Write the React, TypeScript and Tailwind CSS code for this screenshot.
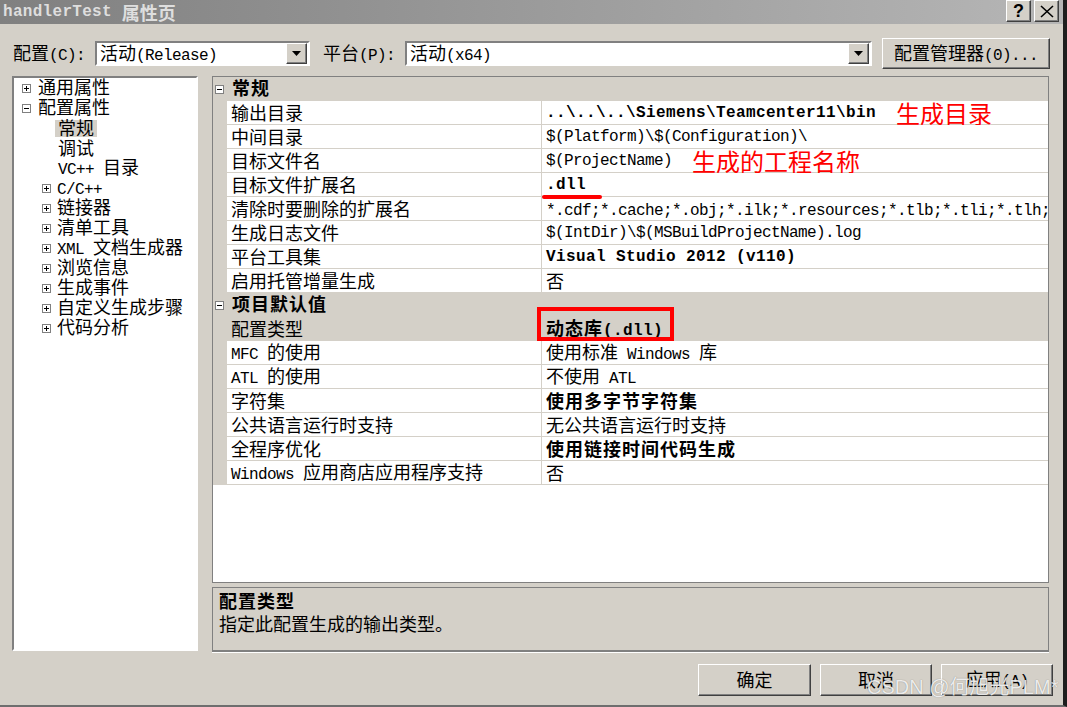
import React from 'react';

const CJK_RE = /([\u3000-\u303f\u4e00-\u9fff\uff00-\uffef]+)/;

function T({ s, bold = false }: { s: string; bold?: boolean }) {
  const parts = s.split(CJK_RE);
  return (
    <span className="whitespace-pre leading-[1.15]">
      {parts.map((p, i) =>
        p === '' ? null : i % 2 === 1 ? (
          <span
            key={i}
            className={
              bold
                ? "font-['Noto_Sans_CJK_SC',sans-serif] text-[18px] font-bold tracking-[1px]"
                : "font-['Noto_Sans_CJK_SC',sans-serif] text-[18px]"
            }
          >
            {p}
          </span>
        ) : (
          <span
            key={i}
            className={
              bold
                ? "font-['Liberation_Mono',monospace] text-[16px] font-bold tracking-[0.4px]"
                : "font-['Liberation_Mono',monospace] text-[16px] tracking-[-0.6px]"
            }
          >
            {p}
          </span>
        ),
      )}
    </span>
  );
}

function BoxIcon({ open }: { open: boolean }) {
  return (
    <svg width="9" height="9" viewBox="0 0 9 9" className="shrink-0">
      <rect x="0.5" y="0.5" width="8" height="8" fill="white" stroke="#808080" />
      <line x1="2" y1="4.5" x2="7" y2="4.5" stroke="black" />
      {!open && <line x1="4.5" y1="2" x2="4.5" y2="7" stroke="black" />}
    </svg>
  );
}

function DropArrow() {
  return (
    <div className="flex h-[21px] w-[21px] shrink-0 items-center justify-center border border-t-white border-l-white border-r-[#404040] border-b-[#404040] bg-[#d4d0c8] shadow-[inset_-1px_-1px_0_#808080]">
      <svg width="9" height="5" viewBox="0 0 9 5">
        <path d="M0 0H9L4.5 5Z" fill="black" />
      </svg>
    </div>
  );
}

function Combo({ text, width }: { text: string; width: string }) {
  return (
    <div
      className={`flex h-[25px] items-center justify-between border-2 border-t-[#808080] border-l-[#808080] border-r-white border-b-white bg-white pl-[3px] pr-[1px] ${width}`}
    >
      <T s={text} />
      <DropArrow />
    </div>
  );
}

const raised =
  'flex items-center justify-center border border-t-white border-l-white border-r-[#404040] border-b-[#404040] bg-[#d4d0c8] shadow-[inset_-1px_-1px_0_#808080]';

type TreeItem = { t: string; kind: 'root' | 'sub' | 'leaf'; open?: boolean; sel?: boolean };

const tree: TreeItem[] = [
  { t: '通用属性', kind: 'root', open: false },
  { t: '配置属性', kind: 'root', open: true },
  { t: '常规', kind: 'leaf', sel: true },
  { t: '调试', kind: 'leaf' },
  { t: 'VC++ 目录', kind: 'leaf' },
  { t: 'C/C++', kind: 'sub' },
  { t: '链接器', kind: 'sub' },
  { t: '清单工具', kind: 'sub' },
  { t: 'XML 文档生成器', kind: 'sub' },
  { t: '浏览信息', kind: 'sub' },
  { t: '生成事件', kind: 'sub' },
  { t: '自定义生成步骤', kind: 'sub' },
  { t: '代码分析', kind: 'sub' },
];

function TreeRow({ item }: { item: TreeItem }) {
  if (item.kind === 'leaf') {
    return (
      <div className="flex h-[20px] items-center pl-[41px]">
        <span className={item.sel ? 'flex h-[17px] items-center bg-[#d4d0c8] px-[3px]' : 'flex h-[17px] items-center px-[3px]'}>
          <T s={item.t} />
        </span>
      </div>
    );
  }
  return (
    <div className={item.kind === 'root' ? 'flex h-[20px] items-center pl-[8px]' : 'flex h-[20px] items-center pl-[28px]'}>
      <BoxIcon open={!!item.open} />
      <span className={item.kind === 'root' ? 'ml-[7px]' : 'ml-[6px]'}>
        <T s={item.t} />
      </span>
    </div>
  );
}

function Category({ title }: { title: string }) {
  return (
    <div className="flex h-[24px] shrink-0 items-center bg-[#d4d0c8] pl-[2px]">
      <BoxIcon open />
      <span className="ml-[8px]">
        <T s={title} bold />
      </span>
    </div>
  );
}

function Row({ label, children, selected = false }: { label: string; children: React.ReactNode; selected?: boolean }) {
  return (
    <div className="flex h-[24px] shrink-0">
      <div className="w-[14px] shrink-0 bg-[#d4d0c8]" />
      <div
        className={
          selected
            ? 'flex w-[315px] shrink-0 items-center border-r border-b border-[#d4d0c8] bg-[#d4d0c8] pl-[4px]'
            : 'flex w-[315px] shrink-0 items-center border-r border-b border-[#d4d0c8] bg-white pl-[4px]'
        }
      >
        <T s={label} />
      </div>
      <div
        className={
          selected
            ? 'relative flex min-w-0 flex-1 items-center border-b border-[#d4d0c8] bg-[#d4d0c8] pl-[4px]'
            : 'relative flex min-w-0 flex-1 items-center border-b border-[#d4d0c8] bg-white pl-[4px]'
        }
      >
        {children}
      </div>
    </div>
  );
}

const note = "ml-[20px] shrink-0 font-['Noto_Sans_CJK_SC',sans-serif] text-[24px] leading-none text-[#ff0000]";

export default function App() {
  return (
    <div className="relative flex h-[707px] w-[1067px] flex-col overflow-hidden border-r-4 border-b-2 border-r-[#1e1e1e] border-b-[#6e6e6e] bg-[#d4d0c8] text-black">
      {/* title bar */}
      <div className="flex h-[24px] shrink-0 items-start bg-linear-to-r from-[#808080] to-[#b6b6b6]">
        <div className="flex h-[24px] items-center whitespace-pre pl-[3px] text-[#dedede]">
          <span className="font-['Liberation_Mono',monospace] text-[16px] font-bold tracking-[0.3px]">{'handlerTest '}</span>
          <span className="font-['Noto_Sans_CJK_SC',sans-serif] text-[18px] font-bold">属性页</span>
        </div>
        <div className="ml-auto mr-[4px] flex gap-[3px]">
          <div className={`${raised} h-[22px] w-[25px]`}>
            <span className="font-['Liberation_Sans',sans-serif] text-[18px] font-bold leading-none">?</span>
          </div>
          <div className={`${raised} h-[22px] w-[25px]`}>
            <svg width="14" height="13" viewBox="0 0 14 13">
              <path d="M1 1L13 12M13 1L1 12" stroke="black" strokeWidth="1.6" />
            </svg>
          </div>
        </div>
      </div>

      {/* configuration row */}
      <div className="mt-[14px] flex h-[31px] shrink-0 items-center">
        <div className="ml-[13px] w-[82px]">
          <T s="配置(C):" />
        </div>
        <Combo text="活动(Release)" width="w-[215px]" />
        <div className="ml-[13px] w-[82px]">
          <T s="平台(P):" />
        </div>
        <Combo text="活动(x64)" width="w-[467px]" />
        <div className={`${raised} ml-[10px] h-[31px] w-[168px]`}>
          <T s="配置管理器(0)..." />
        </div>
      </div>

      {/* body */}
      <div className="mt-[7px] flex shrink-0">
        <div className="ml-[12px] h-[575px] w-[186px] border-2 border-t-[#808080] border-l-[#808080] border-r-white border-b-white bg-white">
          {tree.map((it) => (
            <TreeRow key={it.t} item={it} />
          ))}
        </div>

        <div className="ml-[14px] flex w-[837px] flex-col">
          <div className="flex h-[507px] flex-col overflow-hidden border border-[#808080] bg-white">
            <Category title="常规" />
            <Row label="输出目录">
              <T s="..\..\..\Siemens\Teamcenter11\bin" bold />
              <span className={note}>生成目录</span>
            </Row>
            <Row label="中间目录">
              <T s="$(Platform)\$(Configuration)\" />
            </Row>
            <Row label="目标文件名">
              <T s="$(ProjectName)" />
              <span className={note}>生成的工程名称</span>
            </Row>
            <Row label="目标文件扩展名">
              <T s=".dll" bold />
              <div className="absolute top-[22px] left-[0px] z-10 h-[4px] w-[60px] rounded-full bg-[#ff0000]" />
            </Row>
            <Row label="清除时要删除的扩展名">
              <div className="min-w-0 overflow-hidden">
                <T s="*.cdf;*.cache;*.obj;*.ilk;*.resources;*.tlb;*.tli;*.tlh;*.tmp;*.rsp" />
              </div>
            </Row>
            <Row label="生成日志文件">
              <T s="$(IntDir)\$(MSBuildProjectName).log" />
            </Row>
            <Row label="平台工具集">
              <T s="Visual Studio 2012 (v110)" bold />
            </Row>
            <Row label="启用托管增量生成">
              <T s="否" />
            </Row>
            <Category title="项目默认值" />
            <Row label="配置类型" selected>
              <T s="动态库(.dll)" bold />
              <div className="absolute top-[-10px] left-[-5px] z-10 h-[34px] w-[137px] border-4 border-[#ff0000]" />
            </Row>
            <Row label="MFC 的使用">
              <T s="使用标准 Windows 库" />
            </Row>
            <Row label="ATL 的使用">
              <T s="不使用 ATL" />
            </Row>
            <Row label="字符集">
              <T s="使用多字节字符集" bold />
            </Row>
            <Row label="公共语言运行时支持">
              <T s="无公共语言运行时支持" />
            </Row>
            <Row label="全程序优化">
              <T s="使用链接时间代码生成" bold />
            </Row>
            <Row label="Windows 应用商店应用程序支持">
              <T s="否" />
            </Row>
          </div>

          <div className="mt-[4px] flex h-[65px] flex-col border border-b-2 border-[#808080] pt-[3px] pl-[6px]">
            <div className="flex h-[20px] items-center">
              <T s="配置类型" bold />
            </div>
            <div className="mt-[3px] flex h-[20px] items-center">
              <T s="指定此配置生成的输出类型。" />
            </div>
          </div>
          <div className="h-[1px] bg-white" />
        </div>
      </div>

      {/* buttons */}
      <div className="mt-[11px] mr-[10px] flex shrink-0 justify-end gap-[9px]">
        <div className={`${raised} h-[32px] w-[113px]`}>
          <T s="确定" />
        </div>
        <div className={`${raised} h-[32px] w-[112px]`}>
          <T s="取消" />
        </div>
        <div className={`${raised} h-[32px] w-[112px]`}>
          <T s="应用(A)" />
        </div>
      </div>

      <div className="pointer-events-none absolute top-[677px] left-[867px] font-['Liberation_Sans','Noto_Sans_CJK_SC',sans-serif] text-[20px] leading-none text-white/85 [text-shadow:0_0_1px_rgba(0,0,0,0.45)]">
        CSDN @何旭光PLM*
      </div>
    </div>
  );
}
